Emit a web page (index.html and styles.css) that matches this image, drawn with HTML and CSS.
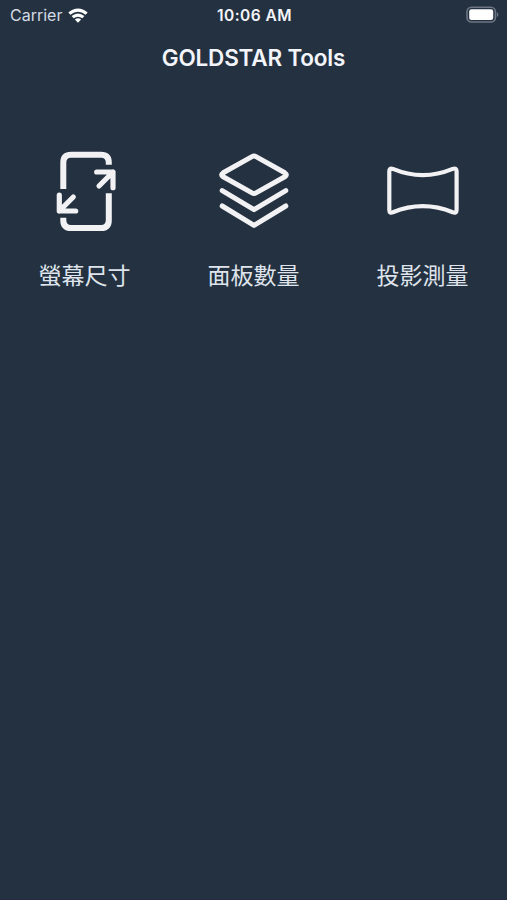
FILE: index.html
```
<!DOCTYPE html>
<html lang="zh-Hant">
<head>
    <meta charset="UTF-8">
    <meta name="viewport" content="width=device-width, initial-scale=1.0">
    <title>GOLDSTAR Tools</title>
    <link rel="stylesheet" href="styles.css">
</head>
<body>
    <div class="status-bar">
        <div class="carrier">
            <span>Carrier</span>
            <svg class="wifi" width="20" height="15" viewBox="0 0 20 15">
                <path d="M0.3 4.6Q10 -3.8 19.7 4.6L17.6 6.8Q10 0.6 2.4 6.8Z"/>
                <path d="M3.6 8.1Q10 2.8 16.4 8.1L14.3 10.3Q10 7 5.7 10.3Z"/>
                <path d="M6.9 11.5Q10 9 13.1 11.5L10 14.7Z"/>
            </svg>
        </div>
        <div class="time">10:06 AM</div>
        <div class="battery">
            <svg width="34" height="18" viewBox="0 0 34 18">
                <rect class="battery-case" x="2" y="1.2" width="28.4" height="14.8" rx="4.5"/>
                <rect class="battery-fill" x="4.2" y="3.3" width="24" height="10.6" rx="2.2"/>
                <path class="battery-tip" d="M31.8 6Q33.4 7 33.4 8.6T31.8 11.2Z"/>
            </svg>
        </div>
    </div>
    <h1 class="title">GOLDSTAR Tools</h1>
    <div class="tools">
        <div class="tool">
            <svg class="icon icon-screen" viewBox="0 0 89 100">
                <path class="frame" d="M23.3 49V22.5Q23.3 14.7 31.1 14.7H61Q68.8 14.7 68.8 22.5V24.7M68.8 53.3V80.2Q68.8 88 61 88H31.1Q23.3 88 23.3 80.2V77.7"/>
                <path class="arrow" d="M56.7 32H73V47.7M73 32L59 46M19.3 55V71H35.7M19.3 71L33.3 57"/>
            </svg>
            <span class="label">螢幕尺寸</span>
        </div>
        <div class="tool">
            <svg class="icon icon-layers" viewBox="0 0 89 100">
                <path d="M43 16.6Q45 15.4 47 16.6L75.8 32.8Q79 34.8 75.8 36.8L47 52.9Q45 54.1 43 52.9L14.2 36.8Q11 34.8 14.2 32.8Z"/>
                <path d="M13.2 50.6L45 69.6L76.8 50.6"/>
                <path d="M13.2 66L45 85.4L76.8 66"/>
            </svg>
            <span class="label">面板數量</span>
        </div>
        <div class="tool">
            <svg class="icon icon-panorama" viewBox="0 0 89 100">
                <path d="M14.9 28.9Q44.8 41.3 74.7 28.9Q78.6 27.6 78.6 31.2V70Q78.6 73.6 74.7 72.3Q44.8 60.1 14.9 72.3Q11.3 73.6 11.3 70V31.2Q11.3 27.6 14.9 28.9Z"/>
            </svg>
            <span class="label">投影測量</span>
        </div>
    </div>
</body>
</html>
```
FILE: styles.css
```
body {
    margin: 0;
    min-height: 900px;
    box-sizing: border-box;
    background-color: #243140;
    border-bottom: 1px solid #26284a;
    color: #f3f5fa;
    font-family: Inter, "Noto Sans CJK TC", sans-serif;
}
.status-bar {
    display: grid;
    grid-template-columns: 1fr auto 1fr;
    align-items: center;
    height: 30px;
    padding: 0 8px 0 10px;
    font-size: 16px;
}
.carrier {
    display: flex;
    align-items: center;
    gap: 6px;
    color: #d3dae3;
}
.wifi {
    fill: #fff;
}
.time {
    font-weight: 600;
    font-size: 15.5px;
    letter-spacing: 0.45px;
}
.battery {
    display: flex;
    justify-content: flex-end;
}
.battery-case {
    fill: none;
    stroke: #6d7682;
    stroke-width: 1.6;
}
.battery-fill {
    fill: #fff;
}
.battery-tip {
    fill: #6d7682;
}
.title {
    margin: 0;
    height: 56px;
    line-height: 56px;
    text-align: center;
    font-size: 22.5px;
    font-weight: 600;
    letter-spacing: -0.2px;
}
.tools {
    display: grid;
    grid-template-columns: repeat(3, 1fr);
    padding-top: 54px;
}
.tool {
    display: flex;
    flex-direction: column;
    align-items: center;
}
.icon {
    width: 89px;
    height: 100px;
    fill: none;
    stroke: #f2f2f4;
    stroke-linejoin: round;
}
.frame {
    stroke-width: 6;
}
.arrow {
    stroke-width: 5.2;
    stroke-linecap: round;
}
.icon-layers {
    stroke-width: 5;
    stroke-linecap: round;
}
.icon-panorama {
    stroke-width: 4.2;
}
.label {
    margin-top: 19px;
    font-size: 23px;
    line-height: 34px;
    font-weight: 400;
    color: #dfe4ec;
}
```
